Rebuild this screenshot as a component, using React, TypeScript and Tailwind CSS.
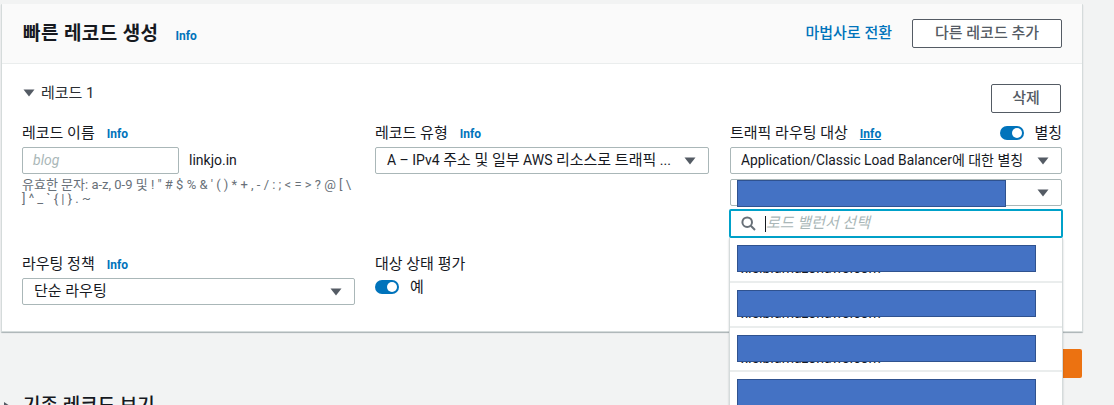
const font = "font-['Roboto','Noto_Sans_CJK_KR',sans-serif]";

function K({ children }: { children: React.ReactNode }) {
  return <span className="text-[15px]">{children}</span>;
}

function Info({ underline }: { underline?: boolean }) {
  return (
    <span className={`text-[12px] leading-[14px] font-bold text-[#0073bb] ${underline ? "underline" : ""}`}>Info</span>
  );
}

function Caret({ className = "" }: { className?: string }) {
  return (
    <svg width="12" height="8" viewBox="0 0 12 8" className={className}>
      <polygon points="0.5,0.5 11.5,0.5 6,7.5" fill="#545b64" />
    </svg>
  );
}

function Toggle() {
  return (
    <span className="flex h-[14px] w-[24px] items-center justify-end rounded-full bg-[#0073bb] pr-[2px]">
      <span className="h-[10px] w-[10px] rounded-full bg-white" />
    </span>
  );
}

function Select({ children, overlay }: { children?: React.ReactNode; overlay?: React.ReactNode }) {
  return (
    <div className="relative flex h-[27px] items-center justify-between rounded-[2px] border border-[#aab7b8] bg-white pl-[10px] pr-[12px] text-[14px] text-[#16191f]">
      <span className="overflow-hidden whitespace-nowrap">{children}</span>
      <Caret className="ml-[8px] shrink-0" />
      {overlay}
    </div>
  );
}

function Redact({ className }: { className: string }) {
  return <div className={`absolute border border-[#2f528f] bg-[#4472c4] ${className}`} />;
}

function Option({ last, h }: { last?: boolean; h: string }) {
  return (
    <div className={`relative pl-[11px] ${h} ${last ? "" : "border-b-2 border-[#eaeded]"}`}>
      <div className="pt-[21px] text-[14px] leading-[18px] text-[#16191f]">x.elb.amazonaws.com</div>
      <Redact className="left-[7px] top-[7px] h-[27px] w-[299px]" />
    </div>
  );
}

function Label({ text, underline }: { text: string; underline?: boolean }) {
  return (
    <div className="flex h-[23px] items-start gap-[12px] text-[15px] leading-[18px]">
      <span>{text}</span>
      <span className="pt-[2px] leading-[14px]"><Info underline={underline} /></span>
    </div>
  );
}

export default function App() {
  return (
    <div className={`${font} h-[405px] w-[1114px] overflow-hidden bg-[#f2f3f3] pl-[1px] pt-[4px] text-[#16191f]`}>
      <div className="h-[328px] w-[1082px] rounded-[1px] border-x border-b border-[#d5dbdb] bg-white shadow-[0_1px_1px_0_rgba(0,28,36,0.3)]">
        <div className="flex h-[60px] items-center justify-between border-b border-[#eaeded] bg-[#fafafa] pl-[21px] pr-[20px]">
          <div className="flex items-center gap-[17px]">
            <h1 className="text-[19px] font-bold leading-[24px] tracking-[0.4px]">빠른 레코드 생성</h1>
            <span className="pt-[2px]"><Info /></span>
          </div>
          <div className="flex items-center gap-[20px]">
            <span className="text-[15px] font-medium text-[#0073bb]">마법사로 전환</span>
            <button className="h-[29px] w-[150px] rounded-[2px] border border-[#545b64] bg-white text-[15px] font-medium text-[#545b64]">다른 레코드 추가</button>
          </div>
        </div>

        <div className="pl-[20px] pr-[20px]">
          <div className="flex h-[60px] items-start justify-between pt-[19px]">
            <div className="flex items-center gap-[6px] pl-px pt-[1px] text-[15px] leading-[18px] text-[#2a2e33]">
              <Caret />
              <span>레코드 1</span>
            </div>
            <button className="mr-px mt-px h-[29px] w-[70px] rounded-[2px] border border-[#545b64] bg-white text-[15px] font-medium text-[#545b64]">삭제</button>
          </div>

          <div className="grid grid-cols-[353px_355px_332px]">
            <div className="h-[131px]">
              <Label text="레코드 이름" />
              <div className="flex items-center gap-[10px]">
                <div className="flex h-[27px] w-[157px] items-center rounded-[2px] border border-[#aab7b8] bg-white pl-[10px] text-[14px] italic text-[#aab7b8]">blog</div>
                <span className="text-[14px]">linkjo.in</span>
              </div>
              <p className="mt-[4px] w-[333px] text-[13px] leading-[14px] text-[#687078]">
                유효한 문자: a-z, 0-9 및 ! " # $ % & ' ( ) * + , - / : ; &lt; = &gt; ? @ [ \ ] ^ _ ` {"{"} | {"}"} . ~
              </p>
            </div>
            <div className="w-[334px]">
              <Label text="레코드 유형" />
              <Select><span className="pl-px">A – IPv4</span> <K>주소 및 일부</K> AWS <K>리소스로 트래픽</K> ...</Select>
            </div>
            <div className="relative">
              <div className="flex h-[23px] items-start justify-between text-[15px] leading-[18px]">
                <Label text="트래픽 라우팅 대상" underline />
                <div className="flex items-center gap-[10px]">
                  <Toggle />
                  <span>별칭</span>
                </div>
              </div>
              <Select><span className="text-[13.8px]">Application/Classic Load Balancer</span>에 대한 별칭</Select>
              <div className="mt-[5px]">
                <Select overlay={<Redact className="left-[6px] top-0 h-[27px] w-[269px]" />} />
              </div>
              <div className="absolute left-[-1px] top-[85px] z-10 w-[334px]">
                <div className="flex h-[29px] items-center rounded-[2px] border-2 border-[#00a1c9] bg-white pl-[10px]">
                  <svg width="15" height="15" viewBox="0 0 15 15" fill="none" stroke="#687078" strokeWidth="2">
                    <circle cx="6.2" cy="6.2" r="4.8" />
                    <line x1="9.8" y1="9.8" x2="14" y2="14" />
                  </svg>
                  <span className="ml-[9px] h-[16px] w-px bg-[#16191f]" />
                  <span className="text-[15px] italic text-[#aab7b8]">로드 밸런서 선택</span>
                </div>
                <div className="h-[200px] border-x border-[#d5dbdb] bg-white shadow-[0_1px_2px_rgba(0,28,36,0.2)]">
                  <Option h="h-[45px]" />
                  <Option h="h-[45px]" />
                  <Option h="h-[44px]" />
                  <Option h="h-[45px]" last />
                </div>
              </div>
            </div>
          </div>

          <div className="grid grid-cols-[353px_355px_332px]">
            <div className="w-[333px]">
              <Label text="라우팅 정책" />
              <div className="h-[28px]">
                <Select><span className="pl-px"><K>단순 라우팅</K></span></Select>
              </div>
            </div>
            <div>
              <div className="flex h-[23px] items-start text-[15px] leading-[18px]">
                <span>대상 상태 평가</span>
              </div>
              <div className="flex items-center gap-[11px] text-[15px] leading-[18px]">
                <Toggle />
                <span>예</span>
              </div>
            </div>
          </div>
        </div>
      </div>

      <div className="mt-[17px] flex w-[1081px] justify-end">
        <div className="h-[29px] w-[100px] rounded-[2px] bg-[#ec7211]" />
      </div>
      <div className="mt-[16px] flex items-center gap-[13px] pl-[3px] text-[19px] font-medium leading-[24px]">
        <svg width="6" height="8" viewBox="0 0 6 8"><polygon points="0,0 6,4 0,8" fill="#545b64" /></svg>
        <span>기존 레코드 보기</span>
      </div>
    </div>
  );
}
